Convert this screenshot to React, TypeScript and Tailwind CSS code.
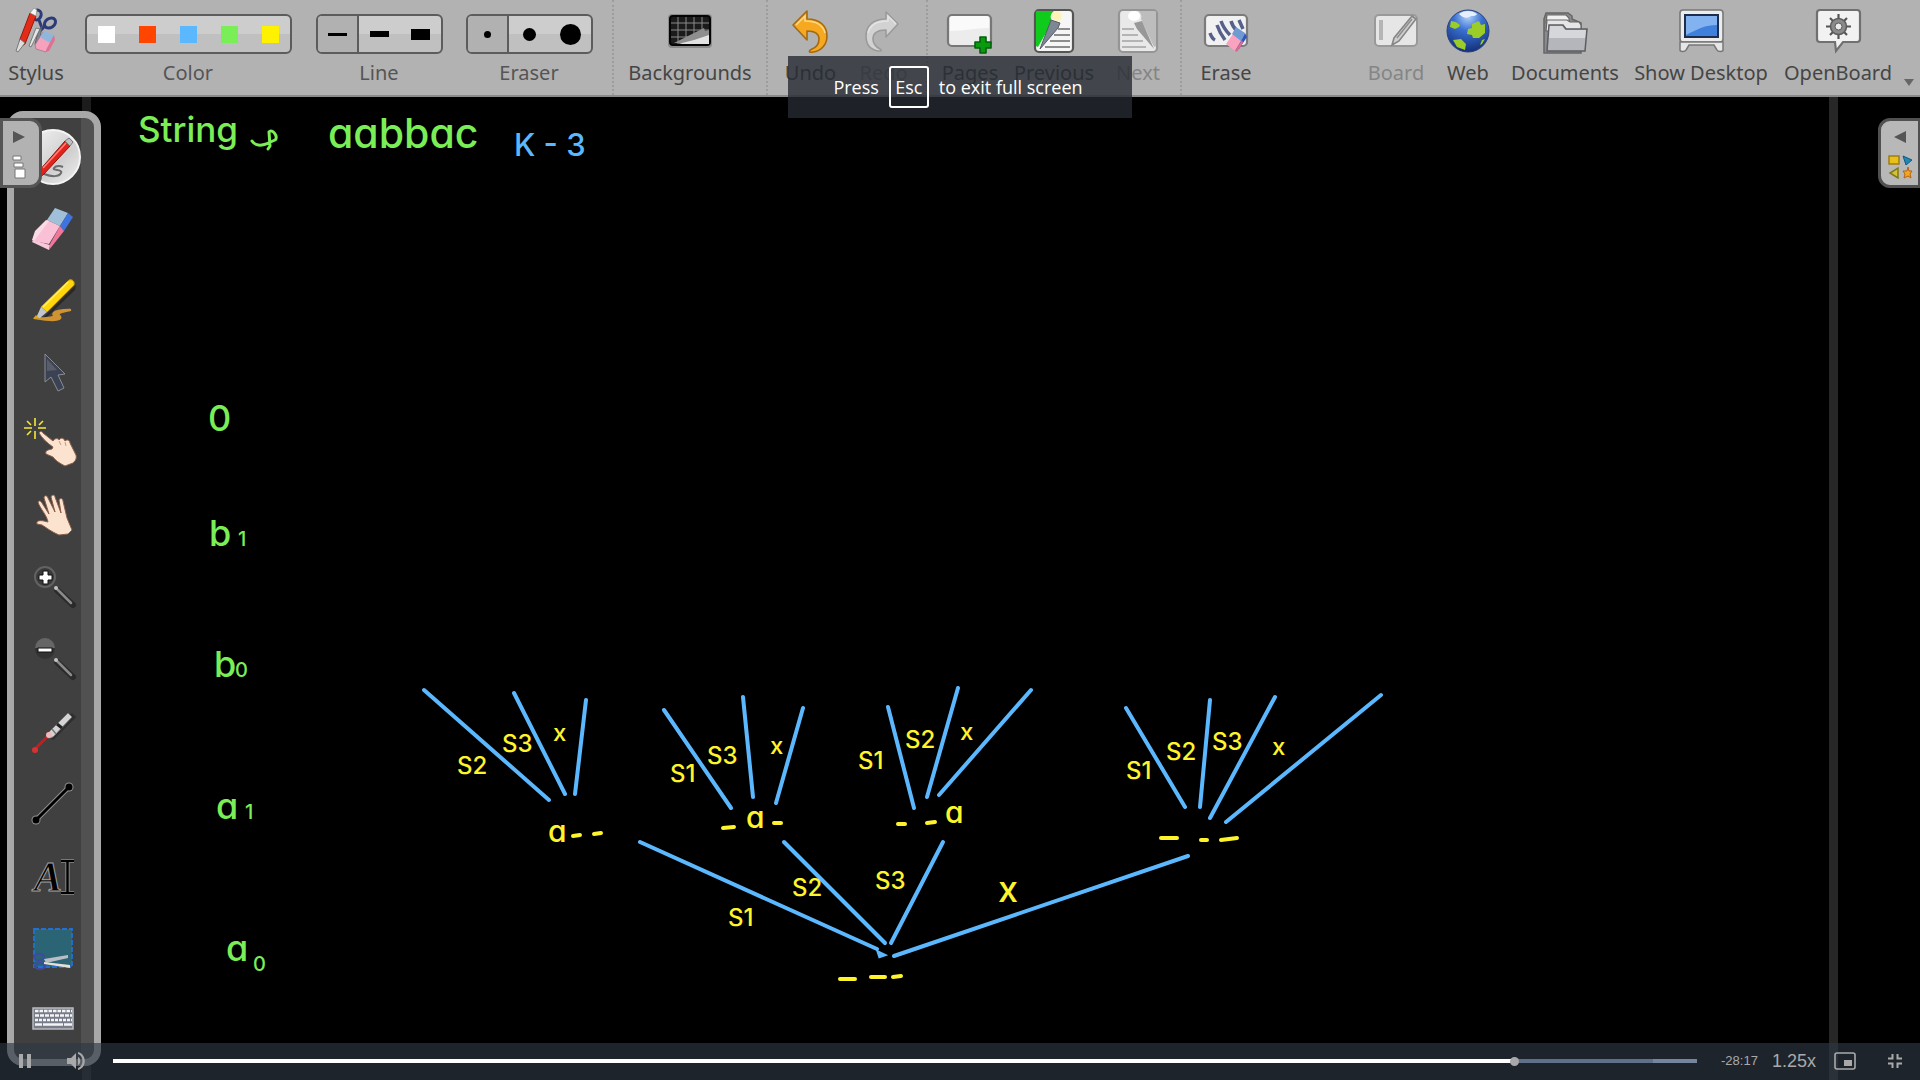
import React from "react";

type IconProps = { className?: string };
type Ico = (p: IconProps) => React.JSX.Element;

/* ---------- Toolbar icons ---------- */

const StylusIcon: Ico = ({ className }) => (
  <svg viewBox="0 0 48 48" className={className} aria-hidden="true">
    <g fill="none" stroke="#2b3a78" strokeWidth="3">
      <ellipse cx="25" cy="9" rx="4" ry="5" transform="rotate(20 25 9)" />
      <ellipse cx="38" cy="17" rx="6" ry="4.500" transform="rotate(-35 38 17)" />
      <path d="M27 14l3 8M33 20l-5 5" />
    </g>
    <path d="M30 20l-2 12-4 8-1-2 3-12z" fill="#7d8590" stroke="#555" strokeWidth=".8" />
    <path d="M28 23l-9 18-2-1 7-18z" fill="#e5e7ea" stroke="#666" strokeWidth=".8" />
    <path d="M18 7l6 3-11 28-6 4 1-9z" fill="#e32b17" stroke="#8f1c10" strokeWidth="1" />
    <path d="M18 7l4-5 3 2-1 6z" fill="#f4f4f4" stroke="#888" strokeWidth=".7" />
    <path d="M8 33l5 4-7 9-2-1z" fill="#ddd" stroke="#666" strokeWidth=".8" />
    <path d="M23 39l8-13 10 6-7 14-10-3z" fill="#f5a3bd" stroke="#a8748a" strokeWidth=".8" />
    <path d="M28 31l4-6 10 4-4 8z" fill="#8fb6dc" />
    <path d="M34 44l8-15 1 5-6 11-3 1z" fill="#dd7292" />
  </svg>
);

const GridIcon: Ico = ({ className }) => (
  <svg viewBox="0 0 48 48" className={className} aria-hidden="true">
    <rect x="2" y="8" width="44" height="34" rx="4" fill="#8b8b8b" />
    <rect x="4" y="10" width="40" height="29" rx="3" fill="#1b1b1b" stroke="#050505" strokeWidth="2" />
    <path d="M12 11v27M20 11v27M28 11v27M36 11v27M5 17h38M5 24h38M5 31h38" stroke="#8a8a8a" strokeWidth="1" />
    <path d="M8 37l12-6 8-4 10-5 1 3 4-1v13z" fill="#8e8e8e" />
    <path d="M12 38l16-4 15-5v9z" fill="#e2e2e2" />
  </svg>
);

const UndoIcon: Ico = ({ className }) => (
  <svg viewBox="0 0 48 48" className={className} aria-hidden="true">
    <path d="M6 19L20 5v8c13 0 20 7 20 17 0 9-6 15-14 16-4 1-5-1-1-3 5-2 7-6 7-10 0-5-4-8-12-8v9z" fill="#f6a821" stroke="#a36a10" strokeWidth="1.600" strokeLinejoin="round" />
    <path d="M9 19l9-9v5c11 0 18 4 20 12" fill="none" stroke="#ffd98a" strokeWidth="1.500" />
  </svg>
);

const RedoIcon: Ico = ({ className }) => (
  <svg viewBox="0 0 48 48" className={className} aria-hidden="true">
    <path d="M38 18L26 6v7C13 13 6 20 6 30c0 9 5 14 13 15 3 0 3-1 1-2-4-2-7-6-7-10 0-6 4-9 13-9v7z" fill="#d2d2d2" stroke="#9a9a9a" strokeWidth="1.600" strokeLinejoin="round" />
    <path d="M36 18l-8-8v5c-11 0-18 4-20 12" fill="none" stroke="#e4e4e4" strokeWidth="1.500" />
  </svg>
);

const PagesIcon: Ico = ({ className }) => (
  <svg viewBox="0 0 48 48" className={className} aria-hidden="true">
    <rect x="2" y="9" width="43" height="31" rx="4" fill="#ececec" stroke="#777" strokeWidth="2.200" />
    <path d="M4 13c0-2 1-3 3-3h33c2 0 3 1 3 3v9c-14 0-24 3-39 3z" fill="#fafafa" />
    <path d="M34 31h6v5h5v6h-5v5h-6v-5h-5v-6h5z" fill="#0a9a10" stroke="#03610a" strokeWidth="1.600" strokeLinejoin="round" />
  </svg>
);

const PreviousIcon: Ico = ({ className }) => (
  <svg viewBox="0 0 48 48" className={className} aria-hidden="true">
    <rect x="5" y="4" width="38" height="42" rx="4" fill="#f6f6f6" stroke="#555" strokeWidth="2.200" />
    <path d="M6 7c0-2 1-2 3-2h15c-3 2-4 5-3 8l1 3L8 41l-2-1z" fill="#0ecb1c" />
    <path d="M21 14l9 3-2 5-18 21z" fill="#7d8894" stroke="#555c66" strokeWidth="1" />
    <ellipse cx="27" cy="10" rx="5" ry="5" fill="#fff4b8" />
    <path d="M28 23h12M24 29h16M20 35h20M15 41h25" stroke="#8d8d8d" strokeWidth="1.800" />
  </svg>
);

const NextIcon: Ico = ({ className }) => (
  <svg viewBox="0 0 48 48" className={className} aria-hidden="true">
    <rect x="5" y="4" width="38" height="42" rx="4" fill="#e9e9e9" stroke="#959595" strokeWidth="2.200" />
    <path d="M42 7c0-2-1-2-3-2H24c3 2 4 5 3 8l13 28 2-1z" fill="#bdbdbd" />
    <path d="M28 15l-8 2 3 6 17 20z" fill="#989898" />
    <ellipse cx="20" cy="10" rx="6" ry="5" fill="#fff" />
    <path d="M8 23h12M8 29h16M8 35h21M8 41h24" stroke="#b4b4b4" strokeWidth="1.800" />
  </svg>
);

const EraseIcon: Ico = ({ className }) => (
  <svg viewBox="0 0 48 48" className={className} aria-hidden="true">
    <rect x="3" y="9" width="42" height="31" rx="4" fill="#f1f1f1" stroke="#7b7b7b" strokeWidth="2.200" />
    <path d="M8 27c1 3 3 6 5 7M15 19c2 6 5 11 8 15M19 15c2 6 6 11 9 14M29 15c1 4 3 7 6 10M37 14l4 9" stroke="#56608a" strokeWidth="3.500" fill="none" />
    <path d="M24 38l7-10 10 6-8 11z" fill="#f9a3c0" />
    <path d="M30 28l4-7 9 6-4 8z" fill="#6f9bd2" />
    <path d="M39 35l4-8 2 4-8 12-4 2z" fill="#2f55c4" />
    <path d="M33 45l7-11 1 3-6 9z" fill="#e26a8d" />
  </svg>
);

const BoardIcon: Ico = ({ className }) => (
  <svg viewBox="0 0 48 48" className={className} aria-hidden="true">
    <rect x="3" y="9" width="42" height="31" rx="4" fill="#e6e6e6" stroke="#999" strokeWidth="2" />
    <rect x="7" y="14" width="4" height="20" fill="#b5b5b5" />
    <path d="M40 10l4 3-17 22-7 4 2-7z" fill="#cfcfcf" stroke="#858585" strokeWidth="1.600" />
    <path d="M25 32l15-19" stroke="#8d8d8d" strokeWidth="1.400" />
  </svg>
);

const WebIcon: Ico = ({ className }) => (
  <svg viewBox="0 0 48 48" className={className} aria-hidden="true">
    <defs>
      <radialGradient id="globe" cx=".5" cy=".15" r=".85">
        <stop offset="0" stopColor="#b5d4fa" />
        <stop offset=".4" stopColor="#3970d2" />
        <stop offset="1" stopColor="#143079" />
      </radialGradient>
    </defs>
    <circle cx="24" cy="25" r="21" fill="url(#globe)" stroke="#27407c" strokeWidth="1" />
    <path d="M7 15l5 1 4 3-1 2-4 2-5-2zM28 18l7-3 2 4 4-1 0 9-6 5-6 0-1-3-5-1 1-5 4-1zM9 34l8-1 5 5-1 6-8-3zM38 34l3-1-3 5-2 1z" fill="#9ccc28" />
    <path d="M15 8c5-4 13-4 18 0-2 3-5 1-8 3s-7 0-10-3z" fill="#e6f0fc" />
  </svg>
);

const DocumentsIcon: Ico = ({ className }) => (
  <svg viewBox="0 0 48 48" className={className} aria-hidden="true">
    <path d="M3 13l2-6h22l4 3v3l9 4v30H3z" fill="#8b8b8f" stroke="#666" strokeWidth="1.500" />
    <path d="M6 9h19l3 3v5H5z" fill="#f0f0f0" stroke="#666" strokeWidth="1.200" />
    <path d="M6 14h20l3 2h9l2 3v6H5z" fill="#e6e6e8" stroke="#666" strokeWidth="1.200" />
    <path d="M8 19h14l3 4h21l-2 22H6z" fill="#b5b6bc" stroke="#5c5d62" strokeWidth="1.500" />
    <path d="M9 20h12l3 4h21l-1 8H8z" fill="#d6d7da" />
  </svg>
);

const DesktopIcon: Ico = ({ className }) => (
  <svg viewBox="0 0 48 48" className={className} aria-hidden="true">
    <rect x="3" y="4" width="43" height="32" rx="3" fill="#ededed" stroke="#777" strokeWidth="1.600" />
    <rect x="8" y="9" width="33" height="22" fill="#3f80dc" stroke="#1d2d4d" strokeWidth="2" />
    <path d="M9 10h31v9c-12 0-19 4-31 10z" fill="#82b2f0" />
    <path d="M3 36h43v8c0 2-5 2-6 0l-3-5H12l-3 5c-1 2-6 2-6 0z" fill="#e6e6e6" stroke="#777" strokeWidth="1.500" />
  </svg>
);

const OpenBoardIcon: Ico = ({ className }) => (
  <svg viewBox="0 0 48 48" className={className} aria-hidden="true">
    <path d="M6 4h37c2 0 3 1 3 3v26c0 2-1 3-3 3H29l-7 9-1-9H6c-2 0-3-1-3-3V7c0-2 1-3 3-3z" fill="#f2f2f2" stroke="#707070" strokeWidth="2.200" />
    <path d="M24.500 8v25M12 20.500h25M16 12l17 17M33 12L16 29" stroke="#555" strokeWidth="2.200" />
    <circle cx="24.500" cy="20.500" r="8" fill="#8a8a8a" stroke="#5a5a5a" strokeWidth="1.500" />
    <circle cx="24.500" cy="20.500" r="3.500" fill="#ededed" stroke="#5a5a5a" strokeWidth="1" />
  </svg>
);

/* ---------- Palette icons ---------- */

const PenIcon: Ico = ({ className }) => (
  <svg viewBox="0 0 60 60" className={className} aria-hidden="true">
    <defs>
      <linearGradient id="disc" x1="0" y1="0" x2="1" y2="1">
        <stop offset="0" stopColor="#f5f5f5" />
        <stop offset=".6" stopColor="#cfcfcf" />
        <stop offset="1" stopColor="#f0f0f0" />
      </linearGradient>
    </defs>
    <circle cx="30" cy="30" r="27" fill="url(#disc)" stroke="#f4f4f4" strokeWidth="2" />
    <path d="M21 47c8 3 15 3 17-1s-9-2-7-5 7-2 9-1" fill="none" stroke="#6d6d6d" strokeWidth="2" />
    <path d="M42 14l5 5-27 29-5 2 1-6z" fill="#e3231b" stroke="#871410" strokeWidth="1" />
    <path d="M42 14l4-3 4 4-3 4z" fill="#bfbfbf" stroke="#777" strokeWidth="1" />
    <path d="M20 41l23-25" stroke="#ff8378" strokeWidth="1.600" />
  </svg>
);

const EraserIcon: Ico = ({ className }) => (
  <svg viewBox="0 0 60 60" className={className} aria-hidden="true">
    <path d="M24 21l8-12 13 5-8 13z" fill="#9fc0d8" />
    <path d="M37 27l8-13 5 4-9 14z" fill="#3f74e0" />
    <path d="M10 42l14-21 13 6-11 18z" fill="#fac0d6" />
    <path d="M9 41l3-9 11-11 3 1-15 20z" fill="#fbdbe6" />
    <path d="M10 41l17 5-1 5-17-8z" fill="#f9c7d9" />
    <path d="M26 51l1-6 10-18 4 5z" fill="#f0779c" />
  </svg>
);

const HighlighterIcon: Ico = ({ className }) => (
  <svg viewBox="0 0 60 60" className={className} aria-hidden="true">
    <path d="M53 14l-1 5-28 27-4 1z" fill="#1e1e1e" opacity=".7" />
    <path d="M12 47c6 1 20 3 24 1s-3-4 0-6 7-2 11-3c-5 0-14 0-16 3s3 3 0 4-12 2-19 1z" fill="#cf9331" stroke="#cf9331" strokeWidth="2.500" strokeLinejoin="round" />
    <path d="M46 9c3-1 6 1 5 5L24 41l-6-5z" fill="#ffd60a" stroke="#c89a06" strokeWidth="1" />
    <path d="M20 36L45 11" stroke="#fff07a" strokeWidth="1.500" />
    <path d="M18 36l6 5-7 6-4 0z" fill="#c2c6cb" />
    <path d="M13 44l3 3-6 1z" fill="#d7a80c" />
  </svg>
);

const ArrowIcon: Ico = ({ className }) => (
  <svg viewBox="0 0 60 60" className={className} aria-hidden="true">
    <path d="M22 11v28l6-5 7 14 6-3-6-13 7-1z" fill="#3b4254" stroke="#8a8d95" strokeWidth="1" />
    <path d="M24 16v12l10-1z" fill="#6d6f78" opacity=".6" />
  </svg>
);

const PointerIcon: Ico = ({ className }) => (
  <svg viewBox="0 0 60 60" className={className} aria-hidden="true">
    <path d="M12 3v8M12 16v8M1 13h8M15 13h8M4 6l4 4M20 6l-4 4M4 20l4-4" stroke="#f5e83a" strokeWidth="1.600" />
    <path d="M16 18c1-2 3-2 4 0l10 8c2-3 5-3 6-1 2-3 5-2 6 1 2-2 5-1 5 2l6 12c1 4-1 6-3 8l-8 3c-6-3-10-6-12-9l-7-3c-1-3 1-4 6-5l1-2c-6-4-11-9-14-14z" fill="#fbe3d0" stroke="#8b5e47" strokeWidth="1" />
    <path d="M36 26l2 4M42 27l1 4" stroke="#c79a82" strokeWidth="1" />
  </svg>
);

const HandIcon: Ico = ({ className }) => (
  <svg viewBox="0 0 60 60" className={className} aria-hidden="true">
    <path d="M15 15c1-2 3-1 4 1l7 11-5-16c0-3 3-3 4 0l7 14-4-15c1-3 4-2 4 0l6 16-2-13c1-2 4-2 4 1l4 17 5 12-4 4-9 1c-9-4-12-7-17-10l-5-1c-1-3 2-4 7-3l4 1c-1-7-8-13-10-20z" fill="#fbe3d0" stroke="#8b5e47" strokeWidth="1" />
  </svg>
);

const ZoomInIcon: Ico = ({ className }) => (
  <svg viewBox="0 0 60 60" className={className} aria-hidden="true">
    <circle cx="22" cy="18" r="10" fill="#3a3a3a" stroke="#626262" strokeWidth="2" />
    <path d="M34 31l16 15" stroke="#2a2a2a" strokeWidth="6" strokeLinecap="round" />
    <path d="M33 29l15 15" stroke="#8a8a8a" strokeWidth="2.500" strokeLinecap="round" />
    <circle cx="33" cy="29" r="2" fill="#c2c2c2" />
    <path d="M20 12h5v4h4v5h-4v4h-5v-4h-4v-5h4z" fill="#fff" stroke="#111" strokeWidth="1" />
  </svg>
);

const ZoomOutIcon: Ico = ({ className }) => (
  <svg viewBox="0 0 60 60" className={className} aria-hidden="true">
    <circle cx="22" cy="18" r="10" fill="#333" />
    <path d="M12 17a10 10 0 0 1 20 0z" fill="#666" />
    <path d="M34 31l16 15" stroke="#2a2a2a" strokeWidth="6" strokeLinecap="round" />
    <path d="M33 29l15 15" stroke="#8a8a8a" strokeWidth="2.500" strokeLinecap="round" />
    <circle cx="33" cy="29" r="2" fill="#c2c2c2" />
    <rect x="15" y="17" width="14" height="4" fill="#fff" stroke="#111" strokeWidth="1" />
  </svg>
);

const LaserIcon: Ico = ({ className }) => (
  <svg viewBox="0 0 60 60" className={className} aria-hidden="true">
    <path d="M51 12L28 35" stroke="#2e2e2e" strokeWidth="6" />
    <path d="M25 33L12 46" stroke="#b52424" strokeWidth="3" />
    <circle cx="12" cy="47" r="3" fill="#d93030" />
    <path d="M45 10l4 4-19 20-5 1 0-5z" fill="#d4d4d4" stroke="#777" strokeWidth="1" />
    <path d="M34 21l5 4" stroke="#222" strokeWidth="3" />
    <path d="M29 26l4 5" stroke="#777" strokeWidth="1.500" />
    <circle cx="26" cy="32" r="3" fill="#f2b7b7" />
  </svg>
);

const LineIcon: Ico = ({ className }) => (
  <svg viewBox="0 0 60 60" className={className} aria-hidden="true">
    <path d="M13 45L46 12" stroke="#929292" strokeWidth="5" />
    <circle cx="13" cy="45" r="4.500" fill="#929292" />
    <circle cx="46" cy="12" r="4.500" fill="#929292" />
    <path d="M13 45L46 12" stroke="#000" strokeWidth="3" />
    <circle cx="13" cy="45" r="3.500" fill="#000" />
    <circle cx="46" cy="12" r="3.500" fill="#000" />
  </svg>
);

const TextIcon: Ico = ({ className }) => (
  <svg viewBox="0 0 60 60" className={className} aria-hidden="true">
    <text x="11" y="44" fontSize="42" className="font-['Liberation_Serif',serif] italic" fontWeight="700" fill="#000" stroke="#a2a2a2" strokeWidth="1">A</text>
    <path d="M38 14h13M44.500 14v32M38 46h13" stroke="#a2a2a2" strokeWidth="4" />
    <path d="M38 14h13M44.500 14v32M38 46h13" stroke="#000" strokeWidth="2.500" />
  </svg>
);

const CaptureIcon: Ico = ({ className }) => (
  <svg viewBox="0 0 60 60" className={className} aria-hidden="true">
    <rect x="11" y="10" width="38" height="38" fill="#2b6474" stroke="#2370d0" strokeWidth="1.800" strokeDasharray="5 2" />
    <g fill="none" stroke="#3d4ba0" strokeWidth="2">
      <ellipse cx="16" cy="38" rx="5" ry="3" />
      <ellipse cx="17" cy="47" rx="5" ry="3" />
    </g>
    <path d="M21 40l24-4v3l-22 5z" fill="#b9bec6" />
    <path d="M21 43l26 3v3l-26-4z" fill="#e8dfd2" />
  </svg>
);

const KeyboardIcon: Ico = ({ className }) => (
  <svg viewBox="0 0 60 60" className={className} aria-hidden="true">
    <rect x="10" y="17" width="40" height="21" fill="#777d88" stroke="#b9bbc0" strokeWidth="1.500" />
    <g stroke="#f4f4f6" strokeWidth="2.600">
      <path d="M12 20h37" strokeDasharray="3.500 1" />
      <path d="M12 24.500h37" strokeDasharray="4 1" />
      <path d="M12 29h37" strokeDasharray="3 1" />
      <path d="M12 33.500h7M20 33.500h20M41 33.500h8" />
    </g>
  </svg>
);

/* ---------- Toolbar ---------- */

type Tool = { label: string; Icon: Ico; width: string; muted?: boolean };

function ToolButton({ label, Icon, width, muted }: Tool) {
  return (
    <button className={`flex shrink-0 flex-col items-center pt-[6px] ${width} ${muted ? "text-[#858585]" : "text-[#454545]"}`}>
      <Icon className="size-12" />
      <span className="mt-[5px] text-xl leading-7 whitespace-nowrap">{label}</span>
    </button>
  );
}

const Separator = () => <div className="w-0 shrink-0 self-stretch border-l-2 border-dotted border-[#9c9c9c]" />;

function Group({ label, width, children }: { label: string; width: string; children: React.ReactNode }) {
  return (
    <fieldset className={`flex shrink-0 flex-col items-center pt-[14px] ${width}`} aria-label={label}>
      <div className="flex h-10 overflow-hidden rounded-md border-2 border-[#5c5c5c] bg-[linear-gradient(#cdcdcd_50%,#c0c0c0_50%)]">
        {children}
      </div>
      <span className="mt-[5px] text-xl leading-7 text-[#555]">{label}</span>
    </fieldset>
  );
}

const colors = [
  { name: "White", cls: "bg-white" },
  { name: "Orange", cls: "bg-[#ff4500]" },
  { name: "Blue", cls: "bg-[#5bb8ff]" },
  { name: "Green", cls: "bg-[#7aee56]" },
  { name: "Yellow", cls: "bg-[#fff200]" },
];

const lineSizes = [
  { name: "Thin line", cls: "h-[3px] w-[19px]" },
  { name: "Medium line", cls: "h-[6px] w-[19px]" },
  { name: "Thick line", cls: "h-[11px] w-[19px]" },
];

const eraserSizes = [
  { name: "Small eraser", cls: "size-[7px] rounded-full" },
  { name: "Medium eraser", cls: "size-[13px] rounded-full" },
  { name: "Large eraser", cls: "size-[21px] rounded-full" },
];

function SizeOptions({ group, options }: { group: string; options: { name: string; cls: string }[] }) {
  return (
    <>
      {options.map((o, i) => (
        <label
          key={o.name}
          className={`flex w-[41px] items-center justify-center ${i === 0 ? "border-r-2 border-[#5c5c5c] bg-[#b1b1b1]" : ""}`}
        >
          <input type="radio" name={group} aria-label={o.name} defaultChecked={i === 0} className={`appearance-none bg-black ${o.cls}`} />
        </label>
      ))}
    </>
  );
}

function Toolbar() {
  return (
    <header className="flex h-[97px] justify-between border-b-2 border-[#8a8a8a] bg-[#b2b2b2] font-['Noto_Sans',sans-serif]">
      <div className="flex">
        <ToolButton label="Stylus" Icon={StylusIcon} width="w-[72px]" />
        <Group label="Color" width="w-[232px]">
          <div className="flex items-center gap-6 px-[11px]">
            {colors.map((c, i) => (
              <input key={c.name} type="radio" name="color" aria-label={c.name} defaultChecked={i === 3} className={`size-[17px] appearance-none ${c.cls}`} />
            ))}
          </div>
        </Group>
        <Group label="Line" width="w-[150px]">
          <SizeOptions group="line" options={lineSizes} />
        </Group>
        <Group label="Eraser" width="w-[150px]">
          <SizeOptions group="eraser" options={eraserSizes} />
        </Group>
        <div className="w-2" />
        <Separator />
        <ToolButton label="Backgrounds" Icon={GridIcon} width="w-[152px]" />
        <Separator />
        <div className="flex px-[6px]">
          <ToolButton label="Undo" Icon={UndoIcon} width="w-[73px]" />
          <ToolButton label="Redo" Icon={RedoIcon} width="w-[73px]" muted />
        </div>
        <Separator />
        <div className="flex">
          <ToolButton label="Pages" Icon={PagesIcon} width="w-[84px]" />
          <ToolButton label="Previous" Icon={PreviousIcon} width="w-[84px]" />
          <ToolButton label="Next" Icon={NextIcon} width="w-[84px]" muted />
        </div>
        <Separator />
        <ToolButton label="Erase" Icon={EraseIcon} width="w-[88px]" />
      </div>
      <div className="flex">
        <ToolButton label="Board" Icon={BoardIcon} width="w-[72px]" muted />
        <ToolButton label="Web" Icon={WebIcon} width="w-[72px]" />
        <ToolButton label="Documents" Icon={DocumentsIcon} width="w-[122px]" />
        <ToolButton label="Show Desktop" Icon={DesktopIcon} width="w-[150px]" />
        <ToolButton label="OpenBoard" Icon={OpenBoardIcon} width="w-[124px]" />
        <button aria-label="More" className="flex w-5 items-end pb-[9px] pl-1">
          <svg viewBox="0 0 10 7" className="h-[7px] w-[10px]" aria-hidden="true">
            <path d="M0 0h10L5 7z" fill="#666" />
          </svg>
        </button>
      </div>
    </header>
  );
}

/* ---------- Side palette ---------- */

const palette: { name: string; Icon: Ico }[] = [
  { name: "Pen", Icon: PenIcon },
  { name: "Eraser", Icon: EraserIcon },
  { name: "Highlighter", Icon: HighlighterIcon },
  { name: "Select", Icon: ArrowIcon },
  { name: "Interact", Icon: PointerIcon },
  { name: "Scroll page", Icon: HandIcon },
  { name: "Zoom in", Icon: ZoomInIcon },
  { name: "Zoom out", Icon: ZoomOutIcon },
  { name: "Laser pointer", Icon: LaserIcon },
  { name: "Draw line", Icon: LineIcon },
  { name: "Write text", Icon: TextIcon },
  { name: "Capture", Icon: CaptureIcon },
  { name: "Virtual keyboard", Icon: KeyboardIcon },
];

function Palette() {
  return (
    <nav
      aria-label="Drawing tools"
      className="relative mt-[14px] ml-[7px] flex w-[94px] flex-col self-start rounded-2xl border-[7px] border-[#a8a8a8] bg-[linear-gradient(to_right,#404040_67px,#515151_67px)] pt-[3px] pr-[2px] pb-[2px]"
    >
      {palette.map(({ name, Icon }) => (
        <button key={name} aria-label={name} className="flex h-[72px] items-center justify-center">
          <Icon className="size-[60px]" />
        </button>
      ))}
    </nav>
  );
}

/* ---------- Handwriting and tree on the board ---------- */

const branches = [
  [424, 690, 549, 800], [514, 693, 565, 794], [586, 700, 575, 794],
  [664, 710, 731, 808], [743, 697, 753, 797], [803, 708, 776, 803],
  [888, 707, 914, 808], [958, 688, 927, 797], [1031, 690, 939, 795],
  [1126, 708, 1185, 807], [1210, 700, 1200, 807], [1275, 697, 1210, 818], [1381, 695, 1226, 822],
  [640, 842, 877, 949], [784, 842, 885, 943], [943, 842, 891, 943], [1188, 856, 894, 956],
];

const blanks = [
  [573, 836, 580, 835], [594, 834, 601, 833],
  [723, 828, 734, 827], [774, 823, 781, 823],
  [898, 824, 905, 824], [927, 823, 935, 822],
  [1161, 838, 1177, 838], [1201, 840, 1207, 840], [1221, 840, 1237, 838],
  [840, 979, 855, 979], [871, 977, 885, 977], [893, 977, 901, 976],
];

const choices: [string, number, number][] = [
  ["S2", 457, 774], ["S3", 502, 752], ["x", 553, 741],
  ["S1", 670, 782], ["S3", 707, 764], ["x", 770, 754],
  ["S1", 858, 769], ["S2", 905, 748], ["x", 960, 740],
  ["S1", 1126, 779], ["S2", 1166, 760], ["S3", 1212, 750], ["x", 1272, 755],
  ["S1", 728, 926], ["S2", 792, 896], ["S3", 875, 889],
];

const levels: [string, string, number, number, number][] = [
  ["0", "", 208, 431, 0],
  ["b", "1", 209, 546, 238],
  ["b", "0", 214, 677, 235],
  ["a", "1", 216, 819, 245],
  ["a", "0", 226, 961, 253],
];

function Drawing() {
  return (
    <svg
      viewBox="0 97 1920 983"
      preserveAspectRatio="xMinYMin meet"
      className="absolute inset-0 h-full w-full font-['Inter',sans-serif] font-medium [font-feature-settings:'cv11']"
    >
      <g fill="#7aee56">
        <text x="138" y="142" fontSize="35">String</text>
        <text x="328" y="148" fontSize="41">aabbac</text>
        {levels.map(([main, sub, x, y, subX]) => (
          <React.Fragment key={main + sub}>
            <text x={x} y={y} fontSize="36">{main}</text>
            {sub && <text x={subX} y={main === "a" && sub === "0" ? y + 10 : y} fontSize="20">{sub}</text>}
          </React.Fragment>
        ))}
      </g>
      <path d="M252 141c4 6 10 4 14 3l9-4c4-3-3-12-6-8l1 14-2 3" fill="none" stroke="#7aee56" strokeWidth="3" strokeLinecap="round" strokeLinejoin="round" />
      <text x="514" y="156" fontSize="31" fill="#5bb8ff">K - 3</text>
      <g stroke="#5bb8ff" strokeWidth="4" strokeLinecap="round">
        {branches.map(([a, b, c, d], i) => (
          <line key={i} x1={a} y1={b} x2={c} y2={d} />
        ))}
        <path d="M879 953l4 2-3 1z" />
      </g>
      <g stroke="#fff42b" strokeWidth="4" strokeLinecap="round">
        {blanks.map(([a, b, c, d], i) => (
          <line key={i} x1={a} y1={b} x2={c} y2={d} />
        ))}
      </g>
      <g fill="#fff42b" fontSize="24">
        {choices.map(([t, x, y], i) => (
          <text key={i} x={x} y={y}>{t}</text>
        ))}
        <text x="998" y="902" fontSize="36">x</text>
        <text x="548" y="842" fontSize="30">a</text>
        <text x="746" y="828" fontSize="30">a</text>
        <text x="945" y="823" fontSize="30">a</text>
      </g>
    </svg>
  );
}

/* ---------- Player ---------- */

function Player() {
  return (
    <footer className="absolute inset-x-0 bottom-0 flex h-[37px] items-center bg-[#2e3844]/65 pr-[17px] pb-px pl-4 font-['Liberation_Sans',sans-serif] text-[#a9a9a9]">
      <button aria-label="Pause" className="w-[18px]">
        <svg viewBox="0 0 18 18" className="size-[18px]" fill="currentColor" aria-hidden="true">
          <path d="M3 2h4v14H3zM11 2h4v14h-4z" />
        </svg>
      </button>
      <button aria-label="Mute" className="ml-8">
        <svg viewBox="0 0 20 20" className="size-5" fill="currentColor" aria-hidden="true">
          <path d="M1 7h4l5-5v16l-5-5H1z" />
          <path d="M12 6c3 1 3 7 0 8zM12 1c9 2 9 16 0 18v-2c6-2 6-12 0-14z" />
        </svg>
      </button>
      <input
        type="range"
        aria-label="Seek"
        min={0}
        max={1000}
        defaultValue={887}
        className="ml-[27px] h-1 min-w-0 flex-1 appearance-none bg-[linear-gradient(to_right,white_88.5%,#5f7088_88.5%,#5f7088_97.2%,#73869e_97.2%)] [&::-webkit-slider-thumb]:size-[9px] [&::-webkit-slider-thumb]:appearance-none [&::-webkit-slider-thumb]:rounded-full [&::-webkit-slider-thumb]:bg-[#a9a9a9]"
      />
      <span className="ml-6 w-9 text-[13px] leading-4">-28:17</span>
      <button className="ml-[15px] w-[46px] text-left text-lg leading-6">1.25x</button>
      <button aria-label="Picture in picture" className="ml-4">
        <svg viewBox="0 0 22 18" className="h-[18px] w-[22px]" aria-hidden="true">
          <rect x="1" y="1" width="20" height="16" rx="2" fill="none" stroke="currentColor" strokeWidth="1.600" />
          <rect x="10" y="8" width="8" height="6" fill="currentColor" />
        </svg>
      </button>
      <button aria-label="Exit full screen" className="ml-[31px]">
        <svg viewBox="0 0 16 16" className="size-4" fill="none" stroke="currentColor" strokeWidth="2" aria-hidden="true">
          <path d="M1 5.500h4.500V1M10.500 1v4.500H15M1 10.500h4.500V15M10.500 15v-4.500H15" />
        </svg>
      </button>
    </footer>
  );
}

export default function App() {
  return (
    <div className="relative flex min-h-screen flex-col overflow-hidden bg-black">
      <Toolbar />
      <main className="relative flex flex-1">
        <div className="absolute inset-y-0 left-[82px] w-[9px] bg-[#1c1c1c]" />
        <div className="absolute inset-y-0 right-[82px] w-[9px] bg-[#272727]" />
        <Drawing />
        <Palette />
        <button
          aria-label="Show pages"
          className="absolute top-[21px] left-0 flex h-[70px] w-[42px] flex-col items-center gap-3 rounded-r-xl border-[3px] border-[#555] bg-[#b2b2b2] pt-[10px] pr-1"
        >
          <svg viewBox="0 0 12 12" className="size-3" aria-hidden="true">
            <path d="M0 0l12 6-12 6z" fill="#555" />
          </svg>
          <svg viewBox="0 0 14 24" className="h-6 w-[14px]" aria-hidden="true">
            <path d="M1 1h8v4H1zM2 8h9v4H2zM3 14h10v9H3z" fill="#fff" stroke="#777" strokeWidth="1" />
          </svg>
        </button>
        <button
          aria-label="Show library"
          className="absolute top-[21px] right-0 flex h-[70px] w-[42px] flex-col items-center gap-3 rounded-l-xl border-[3px] border-r-2 border-[#505050] bg-[#b8b8b8] pt-[10px]"
        >
          <svg viewBox="0 0 12 12" className="size-3" aria-hidden="true">
            <path d="M12 0L0 6l12 6z" fill="#555" />
          </svg>
          <svg viewBox="0 0 26 24" className="h-6 w-[26px]" aria-hidden="true">
            <path d="M2 1h10v8H2z" fill="#e8c01c" stroke="#a07c10" strokeWidth="1.500" />
            <path d="M16 1l9 4-6 5z" fill="#1f86b5" stroke="#145a7c" strokeWidth="1" />
            <path d="M11 13v10l-8-5z" fill="#d5c232" stroke="#807818" strokeWidth="1.500" />
            <path d="M21 12l1 4h3l-2 3 1 4-3-2-4 2 1-4-2-3h4z" fill="#f5a51f" stroke="#b8640c" strokeWidth="1" />
          </svg>
        </button>
      </main>
      <div
        role="status"
        className="absolute top-14 left-1/2 flex h-[62px] w-[344px] -translate-x-1/2 items-center justify-center gap-[10px] bg-[#262b32]/80 pr-1 font-['Open_Sans',sans-serif] text-lg leading-6 text-white"
      >
        <span>Press</span>
        <kbd className="flex h-[42px] w-10 items-center justify-center rounded-[3px] border-2 border-white font-['Open_Sans',sans-serif]">Esc</kbd>
        <span>to exit full screen</span>
      </div>
      <Player />
    </div>
  );
}
